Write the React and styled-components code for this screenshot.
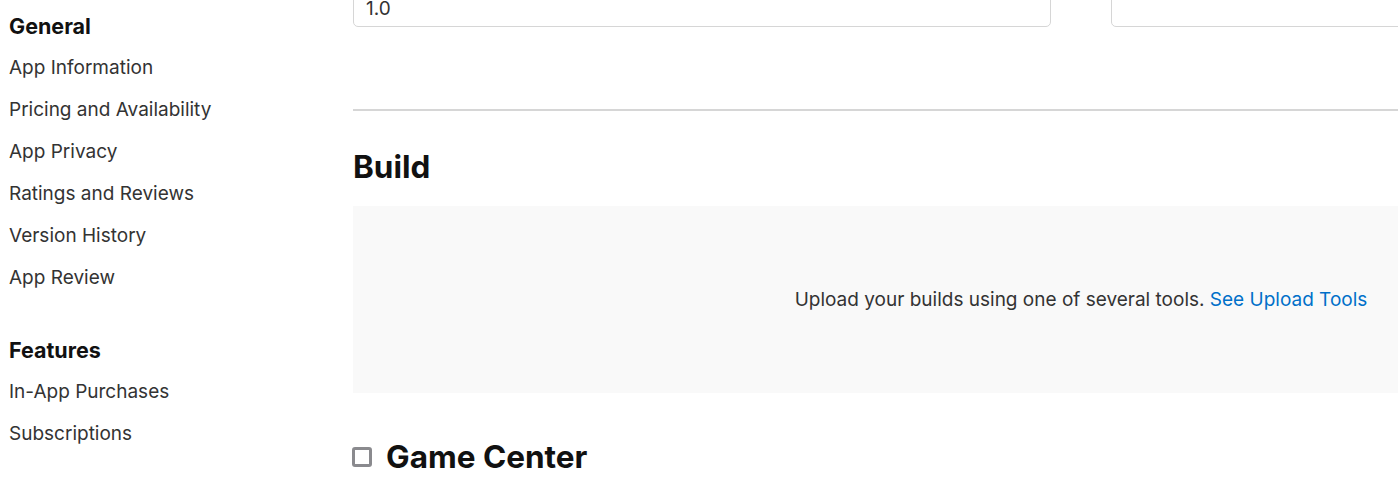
import React from "react";
import styled, { createGlobalStyle } from "styled-components";

const Global = createGlobalStyle`
  html, body {
    margin: 0;
    padding: 0;
    background: #ffffff;
    overflow: hidden;
  }
  body {
    font-family: Inter, "Noto Sans", "Liberation Sans", sans-serif;
    color: #333333;
    -webkit-font-smoothing: antialiased;
  }
`;

const Page = styled.div`
  display: grid;
  grid-template-columns: 353px 1456px;
  width: 1809px;
  margin-top: -11px;
`;

const Sidebar = styled.nav`
  display: flex;
  flex-direction: column;
  gap: 30px;
  padding: 16px 0 0 9px;
`;

const NavGroup = styled.div`
  display: flex;
  flex-direction: column;
`;

const NavHeading = styled.div`
  font-size: 21.5px;
  font-weight: 700;
  color: #111111;
  line-height: 42px;
`;

const NavLink = styled.a`
  font-size: 19px;
  line-height: 42px;
  color: #333333;
  text-decoration: none;
`;

const Main = styled.main`
  display: flex;
  flex-direction: column;
`;

const FieldRow = styled.div`
  display: grid;
  grid-template-columns: 1fr 1fr;
  gap: 60px;
  padding-bottom: 82px;
  border-bottom: 2px solid #d6d6d6;
`;

const Field = styled.div`
  height: 38px;
  box-sizing: border-box;
  border: 1px solid #d6d6d6;
  border-radius: 5px;
  padding: 0 12px;
  display: flex;
  align-items: center;
  font-size: 19px;
  color: #333333;
`;

const SectionTitle = styled.h2`
  margin: ${(p) => p.$top}px 0 0;
  font-size: 31.5px;
  line-height: 36px;
  font-weight: 700;
  color: #111111;
  display: flex;
  align-items: center;
  gap: 14px;
`;

const BuildBox = styled.div`
  margin-top: 21px;
  height: 187px;
  background: #f9f9f9;
  display: flex;
  align-items: center;
  justify-content: center;
  font-size: 19px;
  color: #333333;
`;

const Link = styled.a`
  color: #0070c9;
  text-decoration: none;
`;

const Checkbox = styled.span`
  width: 20px;
  height: 20px;
  box-sizing: border-box;
  border: 3px solid #8a8a8e;
  border-radius: 3px;
  background: #ffffff;
  flex: none;
  margin-left: -1px;
`;

export default function App() {
  return (
    <>
      <Global />
      <Page>
        <Sidebar>
          <NavGroup>
            <NavHeading>General</NavHeading>
            <NavLink href="#">App Information</NavLink>
            <NavLink href="#">Pricing and Availability</NavLink>
            <NavLink href="#">App Privacy</NavLink>
            <NavLink href="#">Ratings and Reviews</NavLink>
            <NavLink href="#">Version History</NavLink>
            <NavLink href="#">App Review</NavLink>
          </NavGroup>
          <NavGroup>
            <NavHeading>Features</NavHeading>
            <NavLink href="#">In-App Purchases</NavLink>
            <NavLink href="#">Subscriptions</NavLink>
          </NavGroup>
        </Sidebar>
        <Main>
          <FieldRow>
            <Field>1.0</Field>
            <Field />
          </FieldRow>
          <SectionTitle $top={38}>Build</SectionTitle>
          <BuildBox>
            <span>
              Upload your builds using one of several tools.{" "}
              <Link href="#">See Upload Tools</Link>
            </span>
          </BuildBox>
          <SectionTitle $top={46}>
            <Checkbox />
            Game Center
          </SectionTitle>
        </Main>
      </Page>
    </>
  );
}
